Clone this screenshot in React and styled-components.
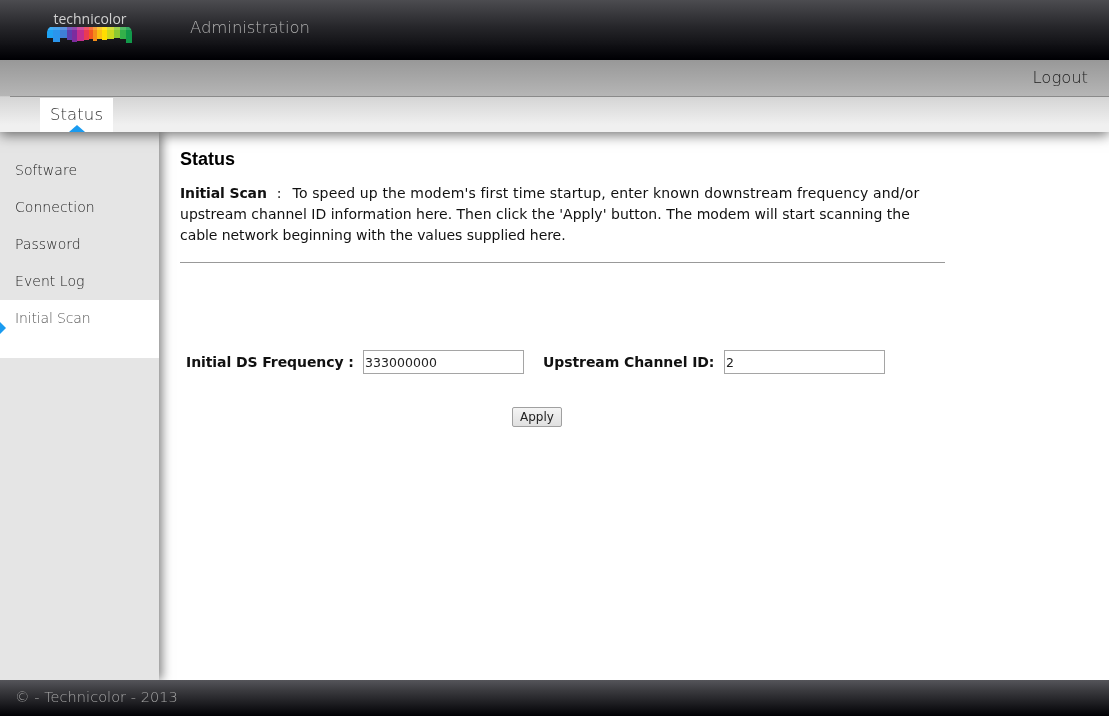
import React from 'react';
import styled, { createGlobalStyle } from 'styled-components';

const GlobalStyle = createGlobalStyle`
  html, body {
    margin: 0;
    padding: 0;
    height: 100%;
    background: #fff;
  }
  #root {
    height: 100%;
  }
`;

const Page = styled.div`
  display: flex;
  flex-direction: column;
  height: 100vh;
  overflow: hidden;
  will-change: transform;
  font-family: "DejaVu Sans", Verdana, sans-serif;
`;

const TopBar = styled.header`
  display: flex;
  align-items: flex-start;
  flex: 0 0 60px;
  background: linear-gradient(#4c4c50 0%, #26262a 45%, #000004 100%);
`;

const LogoBox = styled.div`
  display: flex;
  flex-direction: column;
  align-items: center;
  width: 86px;
  margin: 11px 0 0 47px;
`;

const LogoText = styled.span`
  font-family: "Open Sans", sans-serif;
  font-size: 14px;
  line-height: 15px;
  color: #d0d0d0;
`;

const LogoBar = styled.svg`
  display: block;
  margin-top: 1px;
`;

const AppTitle = styled.span`
  margin: 18px 0 0 57px;
  font-size: 16.5px;
  font-weight: 200;
  letter-spacing: -0.06px;
  line-height: 19px;
  color: #b0b0b0;
`;

const SubNav = styled.div`
  position: relative;
  z-index: 2;
  flex: 0 0 72px;
  display: flex;
  flex-direction: column;
  background: linear-gradient(#989898 0%, #b6b6b6 50%, #d4d4d4 51%, #f0f0f0 90%, #f0f0f0 100%);
  box-shadow: 0 3px 12px rgba(0, 0, 0, 0.55);
`;

const LogoutRow = styled.div`
  flex: 0 0 37px;
  display: flex;
  justify-content: flex-end;
  align-items: center;
  padding-right: 21px;
  margin-left: 10px;
  border-bottom: 1px solid #8a8a8a;
  box-sizing: border-box;
`;

const Logout = styled.a`
  font-size: 16.5px;
  font-weight: 200;
  letter-spacing: -0.08px;
  margin-top: -2px;
  color: #222;
`;

const Tabs = styled.nav`
  display: flex;
  padding: 1px 0 0 40px;
  flex: 1;
`;

const Tab = styled.a`
  position: relative;
  display: flex;
  justify-content: center;
  align-items: flex-start;
  width: 73px;
  padding-top: 7px;
  box-sizing: border-box;
  background: #fff;
  font-size: 16.5px;
  font-weight: 200;
  letter-spacing: 0.1px;
  line-height: 19px;
  color: #333;
`;

const TabArrow = styled.span`
  position: absolute;
  left: 29px;
  bottom: 0;
  width: 0;
  height: 0;
  border-left: 8px solid transparent;
  border-right: 8px solid transparent;
  border-bottom: 7px solid #1a9bf0;
`;

const Body = styled.div`
  flex: 1;
  display: flex;
  min-height: 0;
`;

const SideBar = styled.aside`
  position: relative;
  z-index: 1;
  flex: 0 0 159px;
  padding-top: 20px;
  box-sizing: border-box;
  background: #e5e5e5;
  box-shadow: 3px 0 10px rgba(0, 0, 0, 0.5);
`;

const SideItem = styled.a`
  position: relative;
  display: block;
  height: ${({ $active }) => ($active ? '58px' : '37px')};
  padding: 9px 0 0 15px;
  box-sizing: border-box;
  background: ${({ $active }) => ($active ? '#fff' : 'transparent')};
  font-size: 14px;
  font-weight: 200;
  letter-spacing: ${({ $active }) => ($active ? '-0.15px' : '0.05px')};
  line-height: 18px;
  color: ${({ $active }) => ($active ? '#555' : '#222')};
`;

const SideArrow = styled.span`
  position: absolute;
  left: -6px;
  top: 22px;
  width: 12px;
  height: 12px;
  background: #1a9bf0;
  clip-path: polygon(50% 0, 100% 50%, 50% 100%, 0 50%);
`;

const Main = styled.main`
  flex: 1;
  padding: 18px 0 0 21px;
  min-width: 0;
`;

const Title = styled.h1`
  margin: 0;
  font-family: "Liberation Sans", Arial, sans-serif;
  font-size: 18px;
  font-weight: bold;
  line-height: 18px;
  color: #000;
`;

const Intro = styled.p`
  width: 765px;
  margin: 15px 0 0;
  padding-bottom: 16px;
  border-bottom: 1px solid #999;
  font-size: 14px;
  line-height: 21px;
  color: #111;
`;

const IntroLine = styled.span`
  display: block;
  white-space: nowrap;
  letter-spacing: ${({ $spacing }) => $spacing}px;
`;

const IntroLead = styled.b`
  letter-spacing: -0.14px;
  margin-right: 10px;
`;

const IntroColon = styled.span`
  margin-right: 11px;
`;

const FormRow = styled.form`
  display: flex;
  align-items: center;
  margin: 87px 0 0 6px;
`;

const FieldLabel = styled.label`
  font-size: 14px;
  font-weight: bold;
  letter-spacing: -0.08px;
  color: #111;
  white-space: nowrap;
`;

const FreqLabel = styled(FieldLabel)`
  width: 177px;
`;

const ChannelLabel = styled(FieldLabel)`
  width: 181px;
  margin-left: 19px;
`;

const TextInput = styled.input`
  width: 161px;
  height: 24px;
  padding: 0 2px 0 1px;
  box-sizing: border-box;
  border: 1px solid #a5a5a5;
  border-radius: 0;
  outline: none;
  background: #fff;
  font-family: "DejaVu Sans", Verdana, sans-serif;
  font-size: 12.5px;
  letter-spacing: 0.05px;
  color: #222;
`;

const ButtonRow = styled.div`
  margin: 32px 0 0 332px;
`;

const ApplyButton = styled.button`
  width: 50px;
  height: 20px;
  padding: 0;
  box-sizing: border-box;
  border: 1px solid #a0a0a0;
  border-radius: 2px;
  background: linear-gradient(#f4f4f4, #e0e0e0);
  font-family: "DejaVu Sans", Verdana, sans-serif;
  font-size: 12px;
  color: #222;
`;

const Footer = styled.footer`
  flex: 0 0 36px;
  position: relative;
  z-index: 3;
  display: flex;
  align-items: center;
  padding: 0 0 2px 15px;
  box-sizing: border-box;
  background: linear-gradient(#55555a 0%, #3a3a3e 30%, #000004 100%);
  font-size: 14.5px;
  font-weight: 200;
  letter-spacing: 0.05px;
  color: #a8a8a8;
`;

// x, width, bottom, colour of each block in the logo
const logoBlocks = [
  [0, 6, 11, '#1ea2f2'],
  [6, 7, 15, '#2a95ec'],
  [13, 7, 11, '#3f7fd8'],
  [20, 5, 13, '#5e3fae'],
  [25, 5, 15, '#7c2c9e'],
  [30, 7, 14, '#c22f8e'],
  [37, 5, 13, '#ea3a52'],
  [42, 4, 12, '#f2571f'],
  [46, 4, 14, '#f58e1a'],
  [50, 5, 12, '#fbbf12'],
  [55, 5, 13, '#ffdd00'],
  [60, 7, 12, '#cbd81e'],
  [67, 6, 11, '#8cc832'],
  [73, 6, 12, '#34b04a'],
  [79, 6, 16, '#12994a'],
];

const TechnicolorBar = () => (
  <LogoBar width="86" height="16" viewBox="0 0 86 16">
    <clipPath id="logo-edge">
      <path d="M0 5 Q0 2 3 0 H82 Q85 2 85 5 V16 H0 Z" />
    </clipPath>
    <g clipPath="url(#logo-edge)">
      {logoBlocks.map(([x, width, bottom, color]) => (
        <rect key={x} x={x} y="0" width={width} height={bottom} fill={color} />
      ))}
      <rect x="0" y="0" width="86" height="3" fill="#fff" opacity="0.15" />
    </g>
  </LogoBar>
);

const sideItems = ['Software', 'Connection', 'Password', 'Event Log'];

const App = () => {
  return (
    <Page>
      <GlobalStyle />
      <TopBar>
        <LogoBox>
          <LogoText>technicolor</LogoText>
          <TechnicolorBar />
        </LogoBox>
        <AppTitle>Administration</AppTitle>
      </TopBar>
      <SubNav>
        <LogoutRow>
          <Logout>Logout</Logout>
        </LogoutRow>
        <Tabs>
          <Tab>
            Status
            <TabArrow />
          </Tab>
        </Tabs>
      </SubNav>
      <Body>
        <SideBar>
          {sideItems.map((item) => (
            <SideItem key={item}>{item}</SideItem>
          ))}
          <SideItem $active>
            Initial Scan
            <SideArrow />
          </SideItem>
        </SideBar>
        <Main>
          <Title>Status</Title>
          <Intro>
            <IntroLine $spacing={0.14}>
              <IntroLead>Initial Scan</IntroLead>
              <IntroColon>:</IntroColon>
              To speed up the modem's first time startup, enter known downstream frequency and/or
            </IntroLine>
            <IntroLine $spacing={0.01}>
              upstream channel ID information here. Then click the 'Apply' button. The modem will start scanning the
            </IntroLine>
            <IntroLine $spacing={-0.06}>
              cable network beginning with the values supplied here.
            </IntroLine>
          </Intro>
          <FormRow>
            <FreqLabel>Initial DS Frequency :</FreqLabel>
            <TextInput defaultValue="333000000" />
            <ChannelLabel>Upstream Channel ID:</ChannelLabel>
            <TextInput defaultValue="2" />
          </FormRow>
          <ButtonRow>
            <ApplyButton type="button">Apply</ApplyButton>
          </ButtonRow>
        </Main>
      </Body>
      <Footer>© - Technicolor - 2013</Footer>
    </Page>
  );
};

export default App;
